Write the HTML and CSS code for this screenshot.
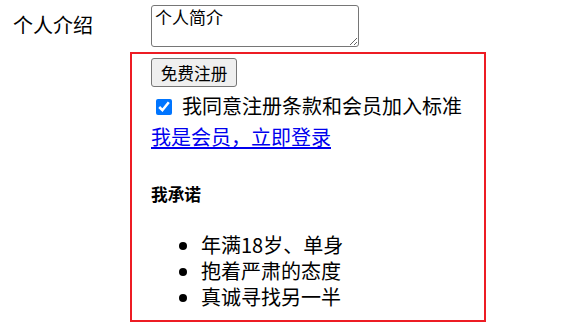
FILE: index.html
```html
<!DOCTYPE html>
<html lang="zh">
<head>
<meta charset="utf-8">
<title>注册</title>
<link rel="stylesheet" href="styles.css">
</head>
<body>
<div class="form">
  <div class="label">个人介绍</div>
  <div class="field">
    <textarea class="intro">个人简介</textarea>
  </div>
  <div class="spacer"></div>
  <div class="box">
    <button class="btn" type="button">免费注册</button>
    <label class="agree"><input type="checkbox" class="check" checked><span class="agree-text">我同意注册条款和会员加入标准</span></label>
    <a class="login" href="#">我是会员，立即登录</a>
    <h5 class="promise">我承诺</h5>
    <ul class="list">
      <li>年满18岁、单身</li>
      <li>抱着严肃的态度</li>
      <li>真诚寻找另一半</li>
    </ul>
  </div>
</div>
</body>
</html>
```

FILE: styles.css
```css
html, body {
  margin: 0;
  padding: 0;
  background: #fff;
}
body {
  font-family: "Noto Sans CJK SC", "Noto Sans", "Liberation Sans", sans-serif;
  color: #000;
}
.form {
  display: grid;
  grid-template-columns: 130px 356px;
  row-gap: 5px;
  padding-top: 5px;
}
.label {
  font-size: 20px;
  line-height: 26px;
  padding-left: 13px;
  align-self: center;
  margin-top: -2px;
}
.field {
  padding-left: 21px;
}
.intro {
  display: block;
  box-sizing: border-box;
  width: 208px;
  height: 42px;
  margin: 0;
  padding: 1px 3px;
  border: 1px solid #767676;
  border-radius: 3px;
  font-family: "Noto Sans CJK SC", sans-serif;
  font-size: 17px;
  line-height: 20px;
  color: #000;
  resize: both;
}
.box {
  box-sizing: border-box;
  height: 270px;
  border: 2px solid #ed1c24;
  padding: 4px 0 10px 19px;
  display: flex;
  flex-direction: column;
  align-items: flex-start;
}
.btn {
  box-sizing: border-box;
  height: 29px;
  width: 86px;
  margin: 0;
  padding: 0 7px;
  border: 1px solid #767676;
  border-radius: 3px;
  background: #efefef;
  font-family: "Noto Sans CJK SC", sans-serif;
  font-size: 16.67px;
  line-height: 20px;
  color: #000;
}
.agree {
  display: flex;
  align-items: center;
  height: 28px;
  margin-top: 5px;
  font-size: 20px;
  line-height: 28px;
}
.check {
  width: 16px;
  height: 16px;
  margin: 1px 10px 0 5px;
  accent-color: #0075ff;
}
.login {
  margin-top: 4px;
  font-size: 20px;
  line-height: 26px;
  color: #0000ee;
  text-decoration: underline;
  text-underline-offset: 2px;
}
.promise {
  margin: 33px 0 0;
  font-size: 16.67px;
  line-height: 22px;
  font-weight: bold;
}
.list {
  margin: 27px 0 0;
  padding-left: 50px;
  font-size: 20px;
  line-height: 26px;
}
```
